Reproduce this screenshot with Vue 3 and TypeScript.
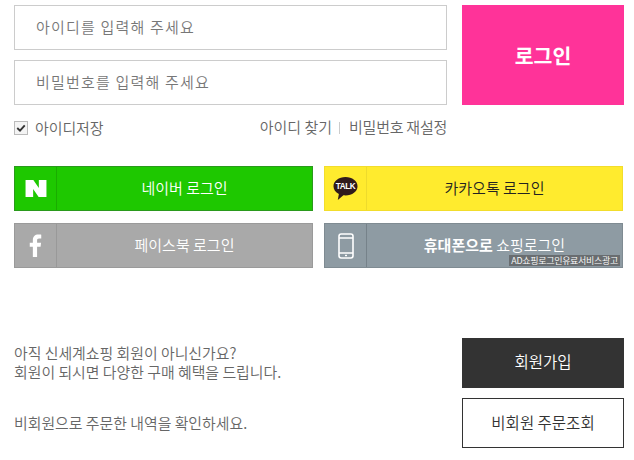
<script setup lang="ts">
const saveLabel: string = '아이디저장'
</script>

<template>
  <main class="page">
    <section class="login">
      <div class="fields">
        <input class="field" type="text" placeholder="아이디를 입력해 주세요" />
        <input class="field" type="password" placeholder="비밀번호를 입력해 주세요" />
      </div>
      <button class="submit" type="button"><span class="lift-sm">로그인</span></button>
    </section>

    <div class="options">
      <label class="save">
        <span class="check">
          <svg viewBox="0 0 12 12" width="10" height="10"><path d="M1.5 6 L4.8 9.2 L10.5 2.8" fill="none" stroke="#333" stroke-width="2.2" /></svg>
        </span>
        <span class="save-text">{{ saveLabel }}</span>
      </label>
      <div class="finds">
        <a>아이디 찾기</a>
        <i class="sep"></i>
        <a class="reset">비밀번호 재설정</a>
      </div>
    </div>

    <section class="sns">
      <a class="sns-btn naver">
        <span class="ico">
          <svg viewBox="0 0 24 20" width="24" height="19"><path d="M1 1 H9.2 L15 9.6 V1 H23 V19 H14.8 L9 10.4 V19 H1 Z" fill="#fff" /></svg>
        </span>
        <span class="label">네이버 로그인</span>
      </a>
      <a class="sns-btn kakao">
        <span class="ico">
          <svg viewBox="0 0 26 26" width="25" height="25">
            <path d="M13 1 C20 1 25.5 5.2 25.5 10.6 C25.5 16 20 20.2 13 20.2 C12.2 20.2 11.5 20.2 10.8 20.1 L5 25 L6.1 18.6 C2.6 16.9 .5 14 .5 10.6 C.5 5.2 6 1 13 1 Z" fill="#301b1c" />
            <text x="13" y="13.8" text-anchor="middle" class="talk">TALK</text>
          </svg>
        </span>
        <span class="label">카카오톡 로그인</span>
      </a>
      <a class="sns-btn facebook">
        <span class="ico">
          <svg viewBox="0 0 14 26" width="13" height="23"><path d="M4 26 V14.5 H.5 V10 H4 V7 C4 2.8 6.5 .6 10 .6 C11.6 .6 13 .7 13.5 .8 V5 H11 C9.2 5 8.8 5.9 8.8 7.2 V10 H13.3 L12.7 14.5 H8.8 V26 Z" fill="#fff" /></svg>
        </span>
        <span class="label">페이스북 로그인</span>
      </a>
      <a class="sns-btn phone">
        <span class="ico">
          <svg viewBox="0 0 16 26" width="16" height="26">
            <rect x="1" y="1" width="14" height="24" rx="2.2" fill="none" stroke="#fff" stroke-width="1.6" />
            <path d="M1 5 H15 M1 20 H15" stroke="#fff" stroke-width="1.4" />
            <rect x="7" y="21.8" width="2" height="1.4" fill="#fff" />
          </svg>
        </span>
        <span class="label"><b>휴대폰으로</b> 쇼핑로그인</span>
        <em class="ad">AD쇼핑로그인유료서비스광고</em>
      </a>
    </section>

    <section class="join">
      <div class="join-row first">
        <p>아직 신세계쇼핑 회원이 아니신가요?<br />회원이 되시면 다양한 구매 혜택을 드립니다.</p>
        <button class="action dark" type="button"><span class="lift">회원가입</span></button>
      </div>
      <div class="join-row">
        <p>비회원으로 주문한 내역을 확인하세요.</p>
        <button class="action line" type="button"><span class="lift">비회원 주문조회</span></button>
      </div>
    </section>
  </main>
</template>

<style>
html, body { margin: 0; background: #fff; }
</style>

<style scoped>
.page {
  width: 634px;
  height: 460px;
  box-sizing: border-box;
  padding: 5px 10px 0 14px;
  overflow: hidden;
  font-family: "Noto Sans CJK KR", "Noto Sans", sans-serif;
  font-size: 15px;
  font-weight: 350;
  color: #555;
}
.lift { display: block; padding-bottom: 3px; }
.lift-sm { display: block; padding-bottom: 1px; }
.login { display: flex; justify-content: space-between; }
.fields { display: flex; flex-direction: column; gap: 10px; width: 433px; }
.field {
  box-sizing: border-box;
  height: 45px;
  width: 100%;
  border: 1px solid #ccc;
  padding: 0 21px 3px;
  outline: 0;
  font: inherit;
  letter-spacing: 1.2px;
}
.field::placeholder { color: #777; opacity: 1; }
.submit {
  width: 162px;
  height: 100px;
  border: 0;
  padding: 0;
  background: #ff3399;
  color: #fff;
  font: inherit;
  font-size: 20.5px;
  font-weight: 700;
}
.options {
  display: flex;
  justify-content: space-between;
  align-items: center;
  width: 433px;
  height: 20px;
  margin-top: 13px;
  color: #666;
}
.save { display: flex; align-items: center; gap: 7px; }
.save-text { padding-bottom: 2px; letter-spacing: -.1px; }
.check {
  box-sizing: border-box;
  width: 14px;
  height: 14px;
  border: 1px solid #bbb;
  background: #f4f4f4;
  display: flex;
  align-items: center;
  justify-content: center;
}
.finds { display: flex; align-items: center; gap: 7px; }
.finds a { padding-bottom: 3px; }
.finds .reset { letter-spacing: -.25px; margin-left: 2px; }
.sep { width: 1px; height: 12px; background: #ccc; }
.sns {
  display: grid;
  grid-template-columns: 299px 299px;
  grid-auto-rows: 45px;
  column-gap: 11px;
  row-gap: 12px;
  margin-top: 28px;
}
.sns-btn {
  position: relative;
  box-sizing: border-box;
  display: flex;
  align-items: center;
  border: 1px solid;
  color: #fff;
}
.ico {
  flex: none;
  box-sizing: border-box;
  width: 42px;
  height: 100%;
  display: flex;
  align-items: center;
  justify-content: center;
  border-right: 1px solid;
}
.label { flex: 1; text-align: center; padding-bottom: 3px; }
.naver { background: #1ec800; border-color: #2a9a1c; }
.naver .ico { border-color: #1aad00; }
.kakao { background: #ffeb2e; border-color: #f2dd2c; color: #222; }
.kakao .ico { border-color: #eedb2c; }
.facebook { background: #a9a9a9; border-color: #9a9a9a; }
.facebook .ico { border-color: #999; }
.phone { background: #8e9ba3; border-color: #7f8b92; }
.phone .ico { border-color: #76828a; }
.talk { font-family: "Liberation Sans", sans-serif; font-size: 8.5px; font-weight: 700; fill: #fff; letter-spacing: -.4px; }
.ad {
  position: absolute;
  right: 2px;
  bottom: 1px;
  padding: 0 2px;
  background: rgba(90, 90, 90, .7);
  color: #fff;
  font-size: 9px;
  font-style: normal;
  letter-spacing: -.3px;
  line-height: 11px;
}
.join { margin-top: 70px; }
.join-row { display: flex; justify-content: space-between; align-items: center; }
.join-row.first { margin-bottom: 10px; }
.join-row p { margin: 0 0 2px; line-height: 19px; color: #666; font-size: 14.9px; }
.action {
  box-sizing: border-box;
  width: 162px;
  height: 50px;
  padding: 0;
  font: inherit;
  font-size: 15.5px;
}
.dark { background: #333; border: 0; color: #fff; }
.dark .lift { padding-bottom: 4px; }
.line { background: #fff; border: 1px solid #333; color: #333; }
</style>
